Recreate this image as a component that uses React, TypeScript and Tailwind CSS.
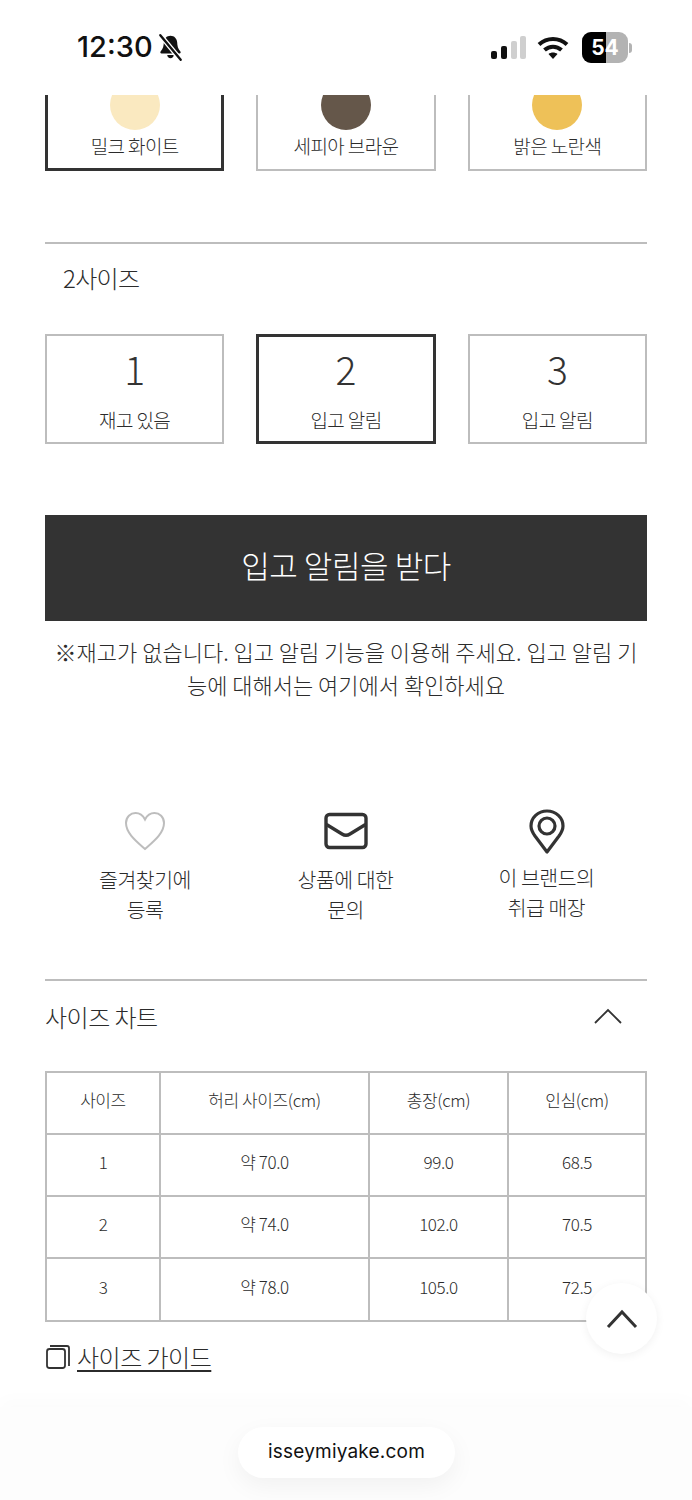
const font = { fontFamily: '"Noto Sans CJK KR","Noto Sans",sans-serif' };

function Swatch({ color, label, selected }: { color: string; label: string; selected?: boolean }) {
  return (
    <div className={`h-[76px] overflow-hidden flex flex-col items-center border-t-0 ${selected ? 'border-x-[3px] border-b-[3px] border-[#333333]' : 'border-x-2 border-b-2 border-[#bdbdbd]'}`}>
      <div className="w-[50px] h-[50px] rounded-full -mt-[15px] shrink-0" style={{ backgroundColor: color }} />
      <div className="mt-[2px] text-[19px] leading-[28px] tracking-[-0.6px] text-[#2b2b2b] font-light whitespace-nowrap">{label}</div>
    </div>
  );
}

function SizeCard({ n, label, selected }: { n: string; label: string; selected?: boolean }) {
  return (
    <div className={`h-[110px] flex flex-col items-center ${selected ? 'border-[3px] border-[#333333] pt-[6px]' : 'border-2 border-[#bdbdbd] pt-[7px]'}`}>
      <div className="text-[39px] leading-[50px] text-[#333] font-light">{n}</div>
      <div className="mt-[13px] text-[19px] leading-[28px] tracking-[-0.6px] text-[#2b2b2b] font-light">{label}</div>
    </div>
  );
}

const rows = [
  ['사이즈', '허리 사이즈(cm)', '총장(cm)', '인심(cm)'],
  ['1', '약 70.0', '99.0', '68.5'],
  ['2', '약 74.0', '102.0', '70.5'],
  ['3', '약 78.0', '105.0', '72.5'],
];

export default function App() {
  return (
    <div className="relative w-[692px] h-[1500px] overflow-hidden bg-white text-[#2b2b2b]" style={font}>
      <div className="h-[95px] flex justify-between items-start pt-[28px] pl-[77px] pr-[60px]">
        <div className="flex items-center gap-[4px]">
          <span className="text-[29px] leading-[38px] font-medium text-[#111]" style={{ fontFamily: 'Inter,sans-serif' }}>12:30</span>
          <svg width="27" height="29" viewBox="0 0 25 27" fill="#111">
            <path d="M12.5 2.5c-3.6 0-6 2.7-6.200 6.200-.2 3.300-.6 6-3 8.600-.6.7-.2 1.700.8 1.700h16.800c1 0 1.400-1 .8-1.700-2.400-2.600-2.800-5.300-3-8.600-.2-3.500-2.600-6.200-6.200-6.200z" />
            <path d="M9.500 20.500h6c0 1.800-1.300 3-3 3s-3-1.200-3-3z" />
            <path d="M3 2l19 23" stroke="#fff" strokeWidth="4.500" />
            <path d="M3 2l19 23" stroke="#111" strokeWidth="2.200" strokeLinecap="round" />
          </svg>
        </div>
        <div className="flex items-center gap-[10px] mt-[4px]">
          <svg width="36" height="24" viewBox="0 0 36 24">
            <rect x="0" y="15" width="6" height="8" rx="2" fill="#111" />
            <rect x="10" y="10" width="6" height="13" rx="2" fill="#111" />
            <rect x="20" y="5" width="6" height="18" rx="2" fill="#cfcfcf" />
            <rect x="29" y="0" width="6" height="23" rx="2" fill="#cfcfcf" />
          </svg>
          <svg width="32" height="24" viewBox="0 0 32 24" fill="none" stroke="#111" strokeWidth="4">
            <path d="M2 8.500c8-7.500 20-7.500 28 0" />
            <path d="M7.500 14c5-4.500 12-4.500 17 0" />
            <path d="M16 23l-4.500-5c2.500-2 6.500-2 9 0z" fill="#111" stroke="none" />
          </svg>
          <div className="flex items-center ml-[3px]">
            <div className="relative w-[46px] h-[31px] rounded-[9px] overflow-hidden flex bg-[#b3b3b3]">
              <div className="w-[24px] bg-black" />
              <div className="absolute inset-0 flex items-center justify-center text-white text-[21px] font-bold" style={{ fontFamily: 'Inter,sans-serif' }}>54</div>
            </div>
            <div className="w-[3px] h-[10px] rounded-r-full bg-[#b3b3b3] ml-[1px]" />
          </div>
        </div>
      </div>

      <div className="pl-[45px] pr-[45px]">
        <div className="grid grid-cols-3 gap-x-[32px]">
          <Swatch color="#fae9c0" label="밀크 화이트" selected />
          <Swatch color="#65574a" label="세피아 브라운" />
          <Swatch color="#eec158" label="밝은 노란색" />
        </div>

        <div className="mt-[71px] h-[2px] bg-[#bdbdbd]" />
        <div className="mt-[18px] pl-[18px] text-[24px] leading-[32px] tracking-[-0.7px] font-light">2사이즈</div>

        <div className="mt-[40px] grid grid-cols-3 gap-x-[32px]">
          <SizeCard n="1" label="재고 있음" />
          <SizeCard n="2" label="입고 알림" selected />
          <SizeCard n="3" label="입고 알림" />
        </div>

        <div className="mt-[71px] h-[106px] pb-[6px] bg-[#333333] flex items-center justify-center text-white text-[31px] font-light tracking-[-0.4px]">입고 알림을 받다</div>

        <div className="mt-[14px] text-center text-[22px] leading-[33px] font-light whitespace-nowrap">
          ※재고가 없습니다. 입고 알림 기능을 이용해 주세요. 입고 알림 기<br />능에 대해서는 여기에서 확인하세요
        </div>

        <div className="mt-[110px] grid grid-cols-3 w-[600px]">
          <div className="flex flex-col items-center">
            <svg width="42" height="40" viewBox="0 0 42 40" fill="none" stroke="#bdbdbd" strokeWidth="2">
              <path d="M21 38C12 30 2 22 2 12 2 6 6.500 2 11.500 2 15.500 2 19 4.500 21 8.500 23 4.500 26.500 2 30.500 2 35.500 2 40 6 40 12 40 22 30 30 21 38z" />
            </svg>
            <div className="mt-[13px] text-[20.500px] leading-[30px] tracking-[-0.5px] font-light text-center">즐겨찾기에<br />등록</div>
          </div>
          <div className="flex flex-col items-center pl-[1px]">
            <svg width="44" height="40" viewBox="0 0 44 40" fill="none" stroke="#333" strokeWidth="3.400" strokeLinejoin="round">
              <rect x="2" y="3.500" width="40" height="33" rx="3.500" />
              <path d="M2.500 13.500 18 23c2.600 1.600 5.400 1.600 8 0l15.500-9.500" />
            </svg>
            <div className="mt-[13px] text-[20.500px] leading-[30px] tracking-[-0.5px] font-light text-center">상품에 대한<br />문의</div>
          </div>
          <div className="flex flex-col items-center -mt-[2px] pl-[3px]">
            <svg width="36" height="46" viewBox="0 0 36 46" fill="none" stroke="#333" strokeWidth="3.200">
              <path d="M18 43 6 27C3.500 23.500 2 20.500 2 17 2 8.500 9 2 18 2s16 6.500 16 15c0 3.500-1.500 6.500-4 10z" strokeLinejoin="round" />
              <circle cx="18" cy="17" r="8" />
            </svg>
            <div className="mt-[7px] text-[20.500px] leading-[30px] tracking-[-0.5px] font-light text-center">이 브랜드의<br />취급 매장</div>
          </div>
        </div>

        <div className="mt-[55px] h-[2px] bg-[#bdbdbd]" />
        <div className="mt-[20px] flex items-center justify-between pr-[25px] h-[32px]">
          <span className="text-[24px] tracking-[-0.5px] font-light">사이즈 차트</span>
          <svg width="28" height="16" viewBox="0 0 28 16" fill="none" stroke="#333" strokeWidth="1.800" className="-mt-[2px]"><path d="M1 15 14 2l13 13" /></svg>
        </div>

        <div className="mt-[38px] grid grid-cols-[114px_209px_139px_138px] border-t-2 border-l-2 border-[#bdbdbd]">
          {rows.flat().map((c, i) => (
            <div key={i} className={`flex items-center justify-center border-r-2 border-b-2 border-[#bdbdbd] pb-[6px] text-[17px] tracking-[-0.4px] font-light ${i >= 12 ? 'h-[63px]' : 'h-[62px]'}`}>{c}</div>
          ))}
        </div>

        <div className="mt-[17px] flex items-center gap-[6px] h-[36px]">
          <svg width="26" height="26" viewBox="0 0 26 26" fill="none" stroke="#333" strokeWidth="1.800">
            <rect x="2" y="5" width="18" height="19" rx="2.500" />
            <path d="M5 2h17c1 0 2 1 2 2v18" />
          </svg>
          <span className="text-[24px] leading-[32px] tracking-[-0.5px] font-light underline underline-offset-[3px]">사이즈 가이드</span>
        </div>
      </div>

      <div className="absolute left-[586px] top-[1283px] w-[71px] h-[71px] rounded-full bg-white shadow-[0_2px_10px_rgba(0,0,0,0.06)] flex items-center justify-center">
        <svg width="32" height="20" viewBox="0 0 32 20" fill="none" stroke="#333" strokeWidth="3"><path d="M2 18 16 3l14 15" /></svg>
      </div>

      <div className="absolute left-0 bottom-0 w-full h-[93px] bg-[#fdfdfd] shadow-[0_-8px_16px_rgba(0,0,0,0.015)]">
        <div className="absolute left-[238px] top-[20px] w-[217px] h-[51px] rounded-full bg-white shadow-[0_8px_24px_rgba(0,0,0,0.05)] flex items-center justify-center text-[19px] text-[#111] font-normal tracking-[0.2px]" style={{ fontFamily: 'Inter,sans-serif' }}>isseymiyake.com</div>
      </div>
    </div>
  );
}
